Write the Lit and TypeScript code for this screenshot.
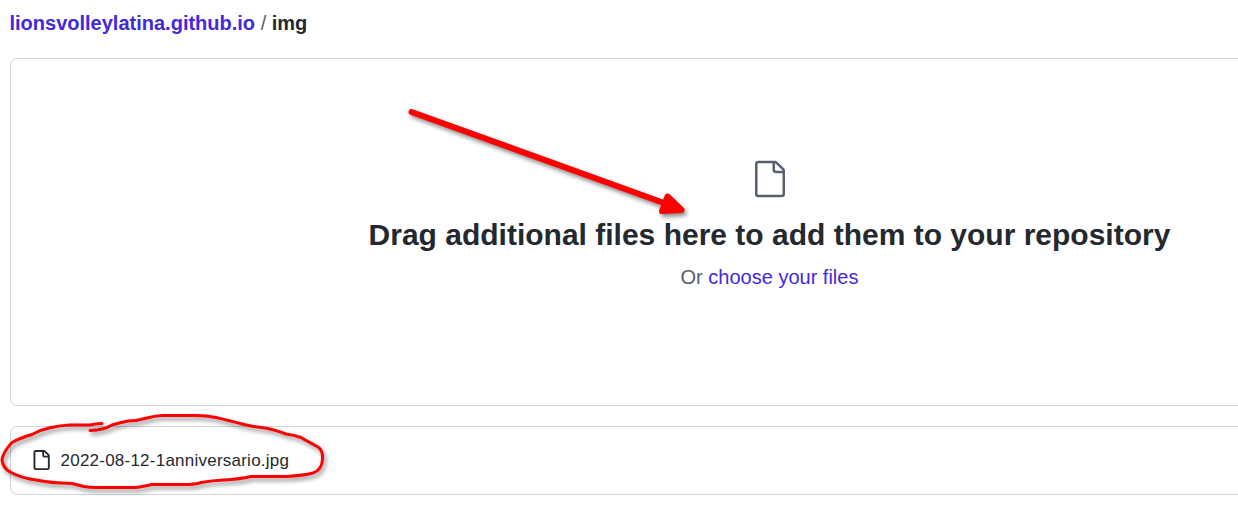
import { LitElement, html, css } from "lit";
import { customElement } from "lit/decorators.js";

@customElement("app-root")
export class AppRoot extends LitElement {
  static styles = css`
    :host {
      display: block;
      position: relative;
      width: 100%;
      height: 515px;
      overflow: hidden;
      background: #fff;
      color: #24292f;
      font-family: "Liberation Sans", Arial, sans-serif;
    }
    .page {
      width: 1519px;
      padding-left: 10px;
    }
    .crumbs {
      height: 58px;
      padding-top: 8px;
      box-sizing: border-box;
      font-size: 20px;
      line-height: 30px;
      color: #57606a;
      white-space: nowrap;
    }
    a {
      color: #4229dc;
      text-decoration: none;
    }
    .repo,
    .folder {
      font-weight: 700;
    }
    .repo {
      margin-left: -0.5px;
    }
    .folder {
      color: #24292f;
    }
    .box {
      box-sizing: border-box;
      border: 1px solid #d0d5e3;
      border-radius: 7.5px;
    }
    .drop {
      height: 348px;
      display: flex;
      flex-direction: column;
      align-items: center;
      padding-top: 100px;
    }
    .drop-icon {
      display: block;
      fill: #57606f;
    }
    h2 {
      margin: 13px 0 0;
      font-size: 30px;
      line-height: 45px;
      font-weight: 700;
    }
    .choose {
      margin: 5px 0 0;
      font-size: 20px;
      line-height: 30px;
      color: #57606a;
    }
    .file {
      margin-top: 20px;
      height: 69px;
      display: flex;
      align-items: center;
      padding-left: 20px;
      gap: 9.5px;
      font-size: 17px;
      letter-spacing: 0.235px;
    }
    .file svg {
      display: block;
      margin-bottom: 1px;
      fill: #24292f;
    }
    .marks {
      position: absolute;
      left: 0;
      top: 0;
      filter: drop-shadow(2px 3px 2px rgba(0, 0, 0, 0.45));
      pointer-events: none;
    }
  `;

  render() {
    return html`
      <div class="page">
        <div class="crumbs">
          <a class="repo">lionsvolleylatina.github.io</a> / <span class="folder">img</span>
        </div>
        <div class="box drop">
          <svg class="drop-icon" width="40" height="40" viewBox="0 0 24 24">
            <path
              fill-rule="evenodd"
              d="M5 2.5a.5.5 0 0 0-.5.5v18a.5.5 0 0 0 .5.5h14a.5.5 0 0 0 .5-.5V8.5h-4a2 2 0 0 1-2-2v-4H5Zm10 0v4a.5.5 0 0 0 .5.5h4a.5.5 0 0 0-.146-.336l-4.018-4.018A.5.5 0 0 0 15 2.5ZM3 3a2 2 0 0 1 2-2h9.982a2 2 0 0 1 1.414.586l4.018 4.018A2 2 0 0 1 21 7.018V21a2 2 0 0 1-2 2H5a2 2 0 0 1-2-2V3Z"
            />
          </svg>
          <h2>Drag additional files here to add them to your repository</h2>
          <p class="choose">Or <a>choose your files</a></p>
        </div>
        <div class="box file">
          <svg width="20" height="20" viewBox="0 0 16 16">
            <path
              fill-rule="evenodd"
              d="M3.75 1.5a.25.25 0 0 0-.25.25v12.5c0 .138.112.25.25.25h9.5a.25.25 0 0 0 .25-.25V6h-2.75A1.75 1.75 0 0 1 9 4.25V1.5H3.75Zm6.75.062V4.25c0 .138.112.25.25.25h2.688a.252.252 0 0 0-.011-.013l-2.914-2.914a.272.272 0 0 0-.013-.011ZM2 1.75C2 .784 2.784 0 3.75 0h6.586c.464 0 .909.184 1.237.513l2.914 2.914c.329.328.513.773.513 1.237v9.586A1.75 1.75 0 0 1 13.25 16h-9.5A1.75 1.75 0 0 1 2 14.25V1.75Z"
            />
          </svg>
          <span>2022-08-12-1anniversario.jpg</span>
        </div>
      </div>
      <svg
        class="marks"
        width="1238"
        height="515"
        fill="none"
        stroke="#f00"
        stroke-linecap="round"
        stroke-linejoin="round"
      >
        <path d="M411.500 112 664 203" stroke-width="6" />
        <path d="M667.500 196.500 681.500 210 662 211Z" fill="#f00" stroke-width="6" />
        <path
          stroke-width="3"
          d="M102 423.500Q96 423.500 90 425H70Q60 425.500 51 427.500Q41 429.500 32 434.500Q20 438 12 442.500Q3 452 2 460Q3 468 10 472Q21 478 36 480Q50 483 72 483.500Q78 485 84 486.500Q90 487.500 96 487.500H136Q146 486 152 484.500H189Q197 484 201 482.500Q212 480.500 224 480Q240 479 251 476.500H287Q303 475.500 313 473Q322 470 322.500 459Q323 450 318 447Q307 441 301 437.500Q294 435 286 434Q275 430 268 428.500Q255 427 244 424.500Q227 420 216 417.500Q206 415.500 196 415.500H162Q154 416 147 418Q137 421 128 421Q119 423 112 425Q104 430 90 430.500"
        />
      </svg>
    `;
  }
}
